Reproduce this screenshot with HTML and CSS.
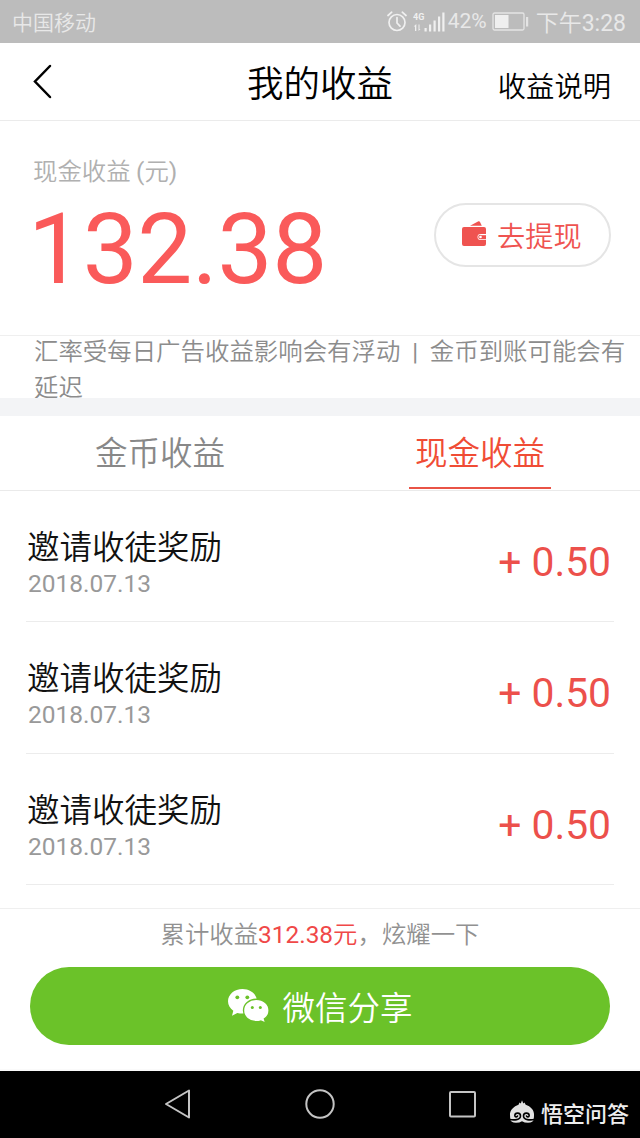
FILE: index.html
```html
<!DOCTYPE html>
<html lang="zh-CN">
<head>
<meta charset="utf-8">
<title>我的收益</title>
<link rel="stylesheet" href="styles.css">
</head>
<body>
<div class="status">
  <span class="carrier">中国移动</span>
  <div class="indicators">
    <svg class="alarm" width="20" height="21" viewBox="0 0 20 21" fill="none" stroke="#f0f0f0" stroke-width="1.7" stroke-linecap="round"><circle cx="10" cy="11.5" r="8"/><path d="M10 6.500V12l3 3.200M1 4.500L4.700 1.200M19 4.500L15.300 1.200"/></svg>
    <svg class="signal" width="33" height="22" viewBox="0 0 33 22" fill="#f0f0f0"><text x="0" y="8.500" class="net">4G</text><path d="M3.300 13v7H2v-4.500H.7zM5.500 13.500h1v4.500h1L5.500 20zM11.500 17h2.200v3.500h-2.200zM16 13.500h2.200v7H16zM20.500 9.500h2.200v11h-2.200zM25 5.500h2.200v15H25zM29.300 1.500h2.200v19h-2.200z"/></svg>
    <span class="percent">42%</span>
    <svg class="battery" width="37" height="19" viewBox="0 0 37 19"><rect x="1" y="1" width="31" height="17" rx="1.500" fill="none" stroke="#e4e4e4" stroke-width="1.300"/><rect x="3" y="3" width="13.500" height="13" fill="#efefef"/><rect x="34" y="5" width="2.200" height="9.500" fill="#e4e4e4"/></svg>
    <span class="clock">下午<span class="num">3:28</span></span>
  </div>
</div>
<header class="header">
  <svg class="back" width="20" height="36" viewBox="0 0 20 36" fill="none" stroke="#000" stroke-width="2.500" stroke-linecap="round"><path d="M17 3L2 18.500l15 15.500"/></svg>
  <h1 class="title">我的收益</h1>
  <span class="explain">收益说明</span>
</header>
<section class="summary">
  <div class="balance">
    <div class="label">现金收益 <span class="num">(</span>元<span class="num">)</span></div>
    <div class="total">132.38</div>
  </div>
  <div class="withdraw">
    <svg class="wallet" width="26" height="28" viewBox="0 0 26 28" fill="#ef5350"><path d="M9 5.800L17.500 1.300Q18.500 1 19 2l1.800 3.800z"/><path d="M3 7h20q2 0 2 2v5h-5.500a3 3 0 0 0 0 6H25V24q0 2-2 2H3q-2 0-2-2V9q0-2 2-2z"/><path d="M19.500 14.700H25v4.600h-5.500a2.300 2.300 0 0 1 0-4.600z"/><path fill="#fff" d="M19.500 14H25v1.200h-5.500z"/><circle cx="19.500" cy="17" r="1.300" fill="#fff"/></svg>
    <span>去提现</span>
  </div>
</section>
<div class="notice"><p>汇率受每日广告收益影响会有浮动<span class="bar">|</span>金币到账可能会有延迟</p></div>
<nav class="tabs">
  <div class="tab"><span>金币收益</span></div>
  <div class="tab"><span class="active">现金收益</span></div>
</nav>
<main class="list">
  <div class="row"><div><div class="name">邀请收徒奖励</div><div class="date">2018.07.13</div></div><div class="amount">+ 0.50</div></div>
  <div class="row"><div><div class="name">邀请收徒奖励</div><div class="date">2018.07.13</div></div><div class="amount">+ 0.50</div></div>
  <div class="row"><div><div class="name">邀请收徒奖励</div><div class="date">2018.07.13</div></div><div class="amount">+ 0.50</div></div>
</main>
<footer class="share">
  <div class="boast">累计收益<span class="sum"><span class="num">312.38</span>元</span>，炫耀一下</div>
  <div class="wechat">
    <svg width="43" height="36" viewBox="0 0 43 36"><path fill="#fff" d="M15.500 1C7.300 1 1 6.500 1 13.300c0 3.900 2 7.200 5.300 9.500L5 27.700l5.300-2.800c1.700.5 3.400.7 5.200.7C23.500 25.600 30 20.200 30 13.300S23.500 1 15.500 1z"/><path fill="#fff" stroke="#6bc229" stroke-width="1.400" d="M29.300 11.300c-7.200 0-12.800 4.900-12.800 11.200s5.600 11.300 12.800 11.300c1.500 0 3-.2 4.400-.7l5 2-1.300-4.200c2.900-2 4.700-5 4.700-8.400 0-6.300-5.600-11.200-12.800-11.200z"/><g fill="#6bc229"><circle cx="10.300" cy="9.300" r="1.900"/><circle cx="20.300" cy="9.300" r="1.900"/><circle cx="25.300" cy="19.500" r="1.500"/><circle cx="33.300" cy="19.500" r="1.500"/></g></svg>
    <span>微信分享</span>
  </div>
</footer>
<div class="navbar">
  <svg class="keys" width="312" height="32" viewBox="0 0 312 32" fill="none" stroke="#c4c4c4" stroke-width="2" stroke-linejoin="round"><path d="M2 16L25 2.500v27z"/><circle cx="156" cy="16" r="13.700"/><rect x="286" y="4" width="25" height="24.500" rx="1"/></svg>
  <div class="brand">
    <svg width="26" height="24" viewBox="0 0 26 24"><path fill="#e2e2e2" d="M1 15.500C.5 10 5 6.500 9.500 4.800L10.500 2.500l1.300 1L13 .300 14.300 3.500l1.200-1L16.700 4.800C21.500 6.500 25.500 10 25 15.500z"/><path fill="#e2e2e2" d="M1 14h24v2l-.2 2.500Q24.500 22.800 19 22.800q-3.500 0-6-1.600-2.500 1.600-6 1.600-5.500 0-5.800-4.300z"/><path fill="none" stroke="#000" stroke-width="1.600" stroke-linecap="round" d="M0 19.300c5 1.200 11.500.8 11.500-3.300 0-3.700-5.500-3.700-5.700-.5 0 1.600 2.200 1.900 2.700.5M26 19.300c-5 1.200-11.500.8-11.500-3.300 0-3.700 5.500-3.700 5.700-.5 0 1.600-2.200 1.900-2.700.5"/></svg>
    <span>悟空问答</span>
  </div>
</div>
</body>
</html>
```
FILE: styles.css
```css
* { box-sizing: border-box; }
body { margin: 0; width: 640px; height: 1138px; overflow: hidden; background: #fff; font-family: "Noto Sans CJK SC", sans-serif; font-weight: 350; display: flex; flex-direction: column; }
.num, .total, .date, .amount, .percent { font-family: Roboto, sans-serif; font-weight: 400; }
svg { display: block; flex: none; }

.status { flex: none; height: 43px; background: #bcbcbc; color: #e8e8e8; display: flex; justify-content: space-between; padding: 0 14px 0 12px; line-height: 43px; }
.carrier { font-size: 21px; }
.indicators { display: flex; align-items: flex-start; height: 43px; }
.alarm { margin: 11px 6px 0 0; }
.signal { margin-top: 11px; }
.net { font: 700 9px Roboto, sans-serif; }
.percent { font-size: 21px; width: 44px; margin-left: 2px; white-space: nowrap; line-height: 42px; }
.battery { margin: 12px 7px 0 0; }
.clock { font-size: 23px; white-space: nowrap; }

.header { flex: none; height: 78px; border-bottom: 1px solid #ebebeb; display: grid; grid-template-columns: 214px 146px 1fr; padding: 0 29px 0 33px; color: #000; }
.back { margin-top: 20px; }
.title { margin: 0; font-size: 36.500px; font-weight: inherit; line-height: 77px; white-space: nowrap; }
.explain { font-size: 28.300px; line-height: 83px; text-align: right; }

.summary { flex: none; height: 214px; display: flex; justify-content: space-between; padding: 32px 29px 0 33px; }
.label { font-size: 24.400px; line-height: 34px; height: 34px; color: #b0b0b0; white-space: nowrap; }
.total { font-size: 98px; line-height: 120px; height: 120px; color: #fa5a5a; margin: 3px 0 0 -5px; letter-spacing: -.4px; }
.withdraw { width: 177px; height: 64px; margin-top: 50px; border: 2px solid #e5e5e5; border-radius: 32px; display: flex; align-items: center; padding-left: 25px; gap: 10px; color: #ef5350; font-size: 28.200px; line-height: 58px; white-space: nowrap; }
.withdraw span { margin-top: -1px; }
.wallet { margin-top: -2px; }

.notice { flex: none; height: 63px; border-top: 1px solid #efefef; padding-left: 34px; font-size: 24.430px; line-height: 35.500px; color: #8c8c8c; }
.notice p { margin: -4px 0 0; }
.notice .bar { padding: 0 11.800px; font: 400 24px/1 Roboto, sans-serif; }

.tabs { flex: none; height: 93px; border-top: 18px solid #f3f4f6; border-bottom: 1px solid #eaeaea; display: flex; font-size: 32.500px; line-height: 70px; color: #888; }
.tab { flex: 1; text-align: center; }
.tab span { display: inline-block; height: 73px; padding: 0 6px; }
.tab .active { color: #f04c35; border-bottom: 2px solid #e95346; }

.list { flex: none; height: 417px; padding: 0 26px; }
.row { height: 131.400px; border-bottom: 1.500px solid #ececec; display: flex; justify-content: space-between; padding: 36px 3px 0 1px; }
.name { font-size: 32.500px; line-height: 36px; height: 37px; color: #111; }
.date { font-size: 24.500px; line-height: 40px; color: #999; padding-left: 1px; }
.amount { font-size: 40.800px; line-height: 70px; color: #ec504b; }

.share { flex: none; height: 163px; border-top: 1px solid #efefef; border-bottom: 2px solid #fafafa; padding: 0 30px; }
.boast { height: 58px; font-size: 24.400px; line-height: 48px; text-align: center; color: #919191; white-space: nowrap; }
.sum { color: #f04848; }
.wechat { height: 78px; border-radius: 39px; background: #6bc229; color: #fff; display: flex; align-items: center; justify-content: center; gap: 12px; font-size: 32.500px; line-height: 74px; }

.navbar { flex: 1; background: #000; display: flex; justify-content: space-between; padding: 17px 11px 0 164px; }
.brand { display: flex; gap: 6px; padding-top: 12px; color: #eee; font-size: 22px; font-weight: 500; line-height: 28px; white-space: nowrap; }
.brand span { margin-top: -2px; }
```
